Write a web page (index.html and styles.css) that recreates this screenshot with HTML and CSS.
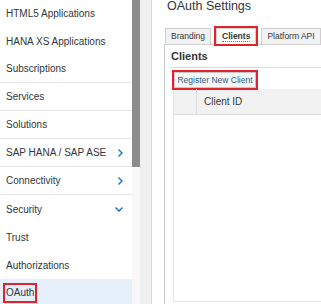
FILE: index.html
```html
<!DOCTYPE html>
<html lang="en">
<head>
    <meta charset="UTF-8">
    <title>OAuth Settings</title>
    <link rel="stylesheet" href="styles.css">
</head>
<body>
    <nav class="sidebar">
        <div class="nav-list">
            <div class="nav-item">HTML5 Applications</div>
            <div class="nav-item">HANA XS Applications</div>
            <div class="nav-item sep">Subscriptions</div>
            <div class="nav-item sep">Services</div>
            <div class="nav-item sep">Solutions</div>
            <div class="nav-item sep">SAP HANA / SAP ASE
                <svg class="chev" width="8" height="10" viewBox="0 0 8 10"><path d="M2.5 1.5 L6 5 L2.5 8.5"/></svg>
            </div>
            <div class="nav-item sep">Connectivity
                <svg class="chev" width="8" height="10" viewBox="0 0 8 10"><path d="M2.5 1.5 L6 5 L2.5 8.5"/></svg>
            </div>
            <div class="nav-item">Security
                <svg class="chev" width="10" height="8" viewBox="0 0 10 8"><path d="M1.5 2.5 L5 6 L8.5 2.5"/></svg>
            </div>
            <div class="nav-item">Trust</div>
            <div class="nav-item">Authorizations</div>
            <div class="nav-item selected"><span class="mark">OAuth</span></div>
        </div>
    </nav>
    <div class="scrollbar"><div class="thumb"></div></div>
    <div class="splitter"></div>

    <main class="main">
        <h1>OAuth Settings</h1>
        <div class="tabstrip">
            <div class="tab">Branding</div>
            <div class="tab active"><span>Clients</span></div>
            <div class="tab">Platform API</div>
        </div>
        <div class="panel">
            <h2>Clients</h2>
            <div class="toolbar">
                <span class="mark-box"><button class="btn">Register New Client</button></span>
            </div>
            <div class="grid">
                <div class="grid-head">
                    <div class="sel-col"></div>
                    <div class="head-cell">Client ID</div>
                </div>
                <div class="grid-body"></div>
            </div>
        </div>
    </main>
</body>
</html>
```

FILE: styles.css
```css
body {
    margin: 0;
    height: 304px;
    overflow: hidden;
    display: flex;
    font-family: "Liberation Sans", Arial, sans-serif;
    color: #32363a;
    background: #fff;
}

/* left navigation */
.sidebar {
    width: 132px;
    flex: none;
    background: #fff;
    overflow: hidden;
}
.nav-list {
    margin-top: -1px;
}
.nav-item {
    height: 28px;
    box-sizing: border-box;
    display: flex;
    align-items: center;
    justify-content: space-between;
    padding: 0 8px 0 6px;
    font-size: 10px;
}
.nav-item.sep {
    border-bottom: 1px solid #e6e6e6;
}
.nav-item.selected {
    background: #e5f0fa;
    padding-left: 3px;
}
.chev path {
    fill: none;
    stroke: #0a6ed1;
    stroke-width: 1.3;
}
.mark {
    display: inline-block;
    border: 2px solid #e0232d;
    padding: 0 1px;
    line-height: 16px;
}

.scrollbar {
    width: 8px;
    flex: none;
    background: #f8f8f8;
}
.thumb {
    height: 167px;
    background: #8c8c8c;
}
.splitter {
    width: 11px;
    flex: none;
    background: #efefef;
    border-right: 1px solid #dadada;
}

/* content */
.main {
    flex: 1;
    min-width: 0;
    padding-left: 12px;
    overflow: hidden;
}
h1 {
    margin: 0;
    padding-left: 3px;
    font-size: 12.5px;
    font-weight: normal;
    line-height: 12px;
    color: #32363a;
}
.tabstrip {
    display: flex;
    gap: 5px;
    margin: 16px 0 0 1px;
}
.tab {
    height: 16px;
    box-sizing: border-box;
    padding: 0 5px;
    border: 1px solid #cfcfcf;
    border-bottom: none;
    background: #f2f2f2;
    font-size: 8.5px;
    line-height: 15px;
    white-space: nowrap;
}
.tab.active {
    background: #fff;
    font-weight: bold;
    outline: 2px solid #e0232d;
}
.tab.active span {
    border-bottom: 1px dotted #5b84ad;
}
.panel {
    border-left: 1px solid #c8c8c8;
    border-top: 1px solid #d0d0d0;
    padding-left: 6px;
    height: 260px;
}
h2 {
    margin: 0 0 0 0;
    height: 22px;
    line-height: 22px;
    font-size: 11px;
    font-weight: bold;
    border-bottom: 1px solid #dddddd;
    margin-left: -1px;
    padding-left: 1px;
}
.toolbar {
    margin: 1px 0 0 1px;
    height: 20px;
}
.mark-box {
    display: inline-block;
    border: 2px solid #e0232d;
}
.btn {
    display: block;
    height: 16px;
    width: 82px;
    margin: 0;
    padding: 0;
    border: 1px solid #c6c6c6;
    background: #f7f7f7;
    color: #2c5b89;
    font-family: "Liberation Sans", Arial, sans-serif;
    font-size: 8.5px;
}
.grid {
    margin-left: 2px;
    border-left: 1px solid #e6e6e6;
    border-bottom: 1px solid #e6e6e6;
}
.grid-head {
    display: flex;
    height: 25px;
    background: #f2f2f2;
    border-bottom: 1px solid #dcdcdc;
}
.sel-col {
    width: 22px;
    border-right: 1px solid #dcdcdc;
}
.head-cell {
    padding-left: 7px;
    font-size: 10px;
    line-height: 25px;
}
.grid-body {
    height: 186px;
}
```
